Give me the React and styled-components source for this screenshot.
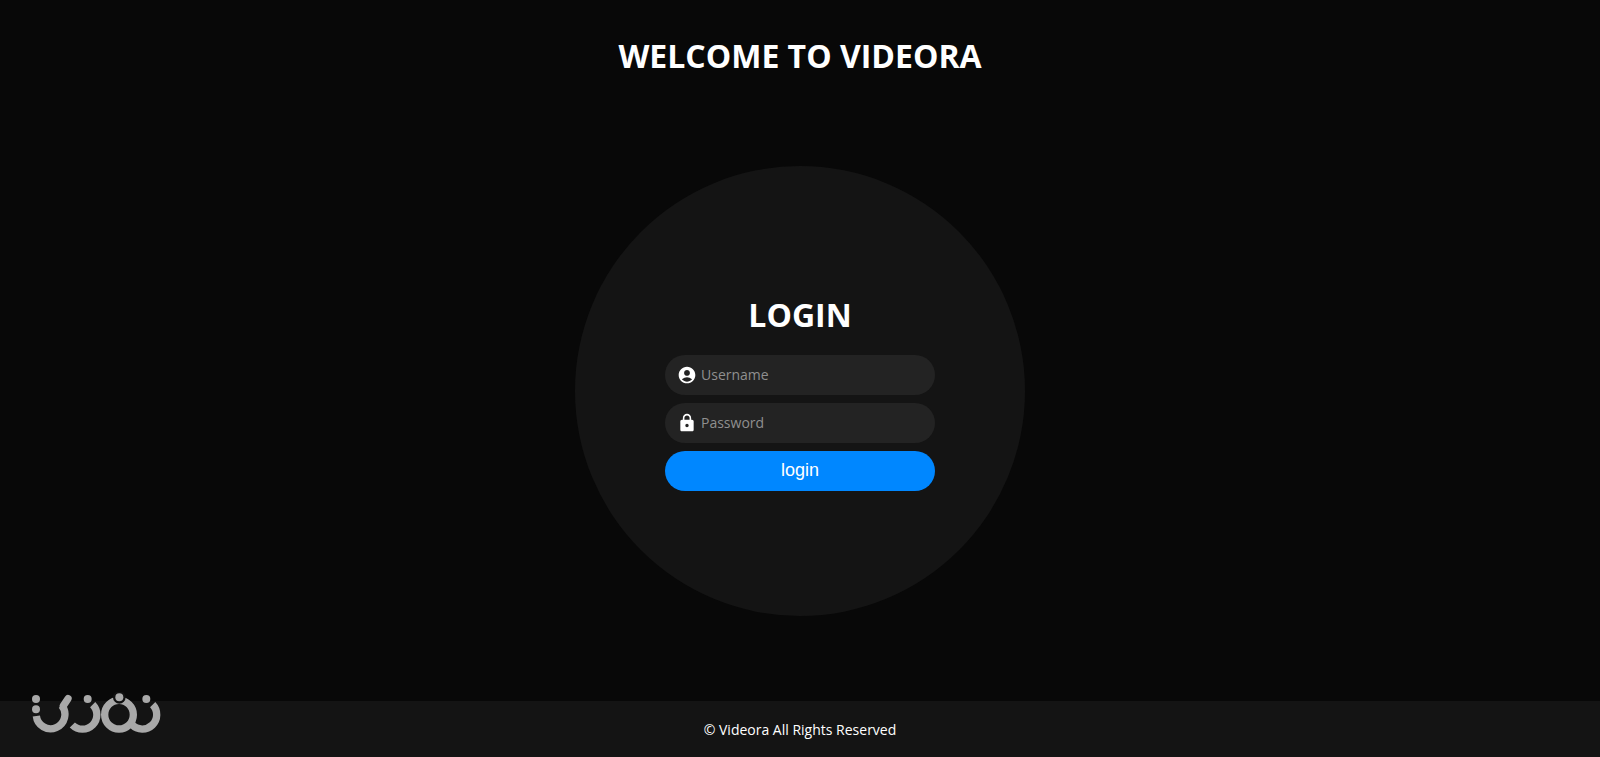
import React, { useState } from 'react';
import styled, { createGlobalStyle } from 'styled-components';
import { MdAccountCircle, MdLock } from 'react-icons/md';

const GlobalStyle = createGlobalStyle`
  * {
    box-sizing: border-box;
  }

  body {
    margin: 0;
    background: #080808;
    color: #fff;
    font-family: 'Open Sans', sans-serif;
  }
`;

const Page = styled.div`
  display: flex;
  flex-direction: column;
  min-height: 100vh;
`;

const Header = styled.header`
  padding: 32px 16px 0;
  text-align: center;
`;

const Title = styled.h1`
  margin: 0;
  font-size: 32px;
  line-height: 48px;
  font-weight: 700;
  text-transform: uppercase;
`;

const Main = styled.main`
  flex: 1;
  display: flex;
  align-items: center;
  justify-content: center;
`;

const LoginCircle = styled.form`
  display: flex;
  flex-direction: column;
  align-items: center;
  justify-content: center;
  gap: 8px;
  width: 450px;
  max-width: 100%;
  aspect-ratio: 1;
  border-radius: 50%;
  background: #141414;
`;

const FormTitle = styled(Title).attrs({ as: 'h2' })`
  margin-bottom: 8px;
`;

const Field = styled.label`
  display: flex;
  align-items: center;
  gap: 4px;
  width: 60%;
  height: 40px;
  padding: 0 12px;
  border-radius: 20px;
  background: #232323;

  svg {
    flex-shrink: 0;
    font-size: 20px;
  }
`;

const Input = styled.input`
  flex: 1;
  min-width: 0;
  padding: 0;
  border: none;
  outline: none;
  background: transparent;
  color: #fff;
  font-family: inherit;
  font-size: 14px;

  &::placeholder {
    color: #8f8f8f;
  }
`;

const LoginButton = styled.button`
  width: 60%;
  height: 40px;
  padding: 0;
  border: none;
  border-radius: 20px;
  background: #0087ff;
  color: #fff;
  font-family: 'Liberation Sans', Arial, sans-serif;
  font-size: 18px;
  cursor: pointer;

  &:hover {
    background: #0078e4;
  }
`;

const Footer = styled.footer`
  display: flex;
  align-items: center;
  justify-content: center;
  min-height: 56px;
  background: #141414;
  font-size: 14px;
`;

const Watermark = styled.svg`
  position: fixed;
  left: 32px;
  bottom: 23px;
  width: 130px;
  height: 42px;
`;

const Logo = () => (
  <Watermark viewBox="96 66 390 126" role="img" aria-label="Logo">
    <g fill="none" stroke="#a9a9a9" strokeWidth="22">
      <path d="M109 138A43 43 0 1 0 185 106" />
      <path d="M190 107L204 86" strokeLinecap="round" />
      <path d="M217 165A43 43 0 0 0 278 104" />
      <circle cx="357" cy="134" r="43" />
      <path d="M396 164A43 43 0 0 0 458 104" />
    </g>
    <circle cx="358" cy="82" r="19" fill="#101010" />
    <g fill="#a9a9a9">
      <circle cx="108" cy="87" r="12" />
      <circle cx="108" cy="118" r="12" />
      <circle cx="263" cy="87" r="12" />
      <circle cx="358" cy="82" r="12" />
      <circle cx="439" cy="87" r="12" />
    </g>
  </Watermark>
);

const App = () => {
  const [username, setUsername] = useState('');
  const [password, setPassword] = useState('');

  const handleSubmit = (e) => {
    e.preventDefault();
  };

  return (
    <Page>
      <GlobalStyle />
      <Header>
        <Title>Welcome to Videora</Title>
      </Header>
      <Main>
        <LoginCircle onSubmit={handleSubmit}>
          <FormTitle>Login</FormTitle>
          <Field>
            <MdAccountCircle />
            <Input
              type="text"
              placeholder="Username"
              aria-label="Username"
              value={username}
              onChange={(e) => setUsername(e.target.value)}
            />
          </Field>
          <Field>
            <MdLock />
            <Input
              type="password"
              placeholder="Password"
              aria-label="Password"
              value={password}
              onChange={(e) => setPassword(e.target.value)}
            />
          </Field>
          <LoginButton type="submit">login</LoginButton>
        </LoginCircle>
      </Main>
      <Footer>© Videora All Rights Reserved</Footer>
      <Logo />
    </Page>
  );
};

export default App;
